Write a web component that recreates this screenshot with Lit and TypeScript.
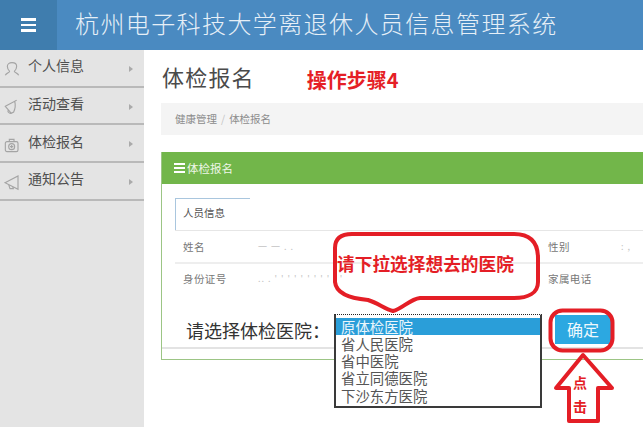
import { LitElement, html, css, svg } from "lit";
import { customElement } from "lit/decorators.js";

const NAV = [
  { t: "个人信息", i: svg`<path d="M8.500 15.500C5.500 13 5 10 5 8c0-3.500 3-5.500 7-5.500s7 2 7 5.500c0 2-.5 5-3.500 7.500 0 2 5 2.500 6.500 6M8.500 15.500c0 2-5 2.500-6.500 6"/>` },
  { t: "活动查看", i: svg`<path d="M2 11L16 3.500c1 4 2.500 7-1.500 16L11 21.500z M6 17c-1 3 3.500 6 6 3.500M16 3.500l3-1.500"/>` },
  { t: "体检报名", i: svg`<rect x="2" y="7" width="19" height="15" rx="2.500"/><path d="M8 7V3.500h7V7"/><circle cx="11.500" cy="14.500" r="4.500"/><path d="M11.500 12v5M9 14.500h5"/>` },
  { t: "通知公告", i: svg`<path d="M1.500 13L21 3v20L1.500 13z M7 16l2 6h5l-1-3"/>` },
];
const HOSPITALS = ["原体检医院", "省人民医院", "省中医院", "省立同德医院", "下沙东方医院"];

@customElement("app-root")
export class AppRoot extends LitElement {
  static styles = css`
    :host { display: block; position: relative; width: 643px; height: 427px; overflow: hidden; background: #fff;
      font-family: "Noto Sans CJK SC", "Liberation Sans", sans-serif; color: #555; }
    .top { display: flex; height: 50px; background: #4a8ac1; }
    .toggle { width: 57px; background: #3f7dae; display: flex; flex-direction: column; justify-content: center; align-items: center; gap: 3px; }
    .toggle i { display: block; width: 15px; height: 2.500px; background: #fff; }
    .brand { margin-left: 18px; font-size: 24px; letter-spacing: 1.400px; line-height: 45px; color: #e6eff7; font-weight: 300; white-space: nowrap; }
    .main { display: flex; height: 377px; }
    .side { width: 144px; flex: none; background: #e4e4e4; }
    .nav { height: 35.700px; border-bottom: 2px solid #b9b9b9; display: flex; align-items: center; padding: 0 11px 0 4px; }
    .nav svg { width: 16px; height: 18px; fill: none; stroke: #a4a4a4; stroke-width: 1.700; flex: none; margin-top: 3px; }
    .nav span { margin-left: 8px; font-size: 14px; color: #4f4f4f; flex: 1; line-height: 1; margin-top: -5px; }
    .nav b { width: 0; height: 0; border-left: 4px solid #aaa; border-top: 3.500px solid transparent; border-bottom: 3.500px solid transparent; margin-top: 2px; }
    .content { flex: 1; min-width: 0; padding: 14px 0 0 17px; }
    .head { display: flex; align-items: flex-start; height: 39px; margin-left: 1px; }
    .head h1 { margin: 0; font-size: 22px; line-height: 24px; font-weight: 400; letter-spacing: 1.200px; color: #4a4a4a; }
    .step { margin-left: 52px; margin-top: 4px; font-size: 20px; line-height: 24px; font-weight: 700; color: #e51f26; }
    .crumb { height: 32px; box-sizing: border-box; padding: 0 0 2px 14px; background: #f4f4f4; display: flex; align-items: center; font-size: 10.500px; color: #8c8c8c; width: 490px; }
    .crumb em { font-style: normal; color: #c4c4c4; margin: 0 4px; }
    .panel { margin-top: 17px; width: 520px; height: 208px; border: 1px solid #9cc585; border-top: 0; box-sizing: border-box; }
    .panel-h { height: 32px; background: #72b64a; color: #eef7e8; display: flex; align-items: center; padding-left: 12px; font-size: 11.500px; gap: 2px; }
    .burger { display: flex; flex-direction: column; gap: 2px; }
    .burger i { display: block; width: 11px; height: 1.700px; background: #fff; }
    .body { padding: 14px 0 0 13px; }
    .tab { width: 75px; height: 32px; box-sizing: border-box; border: 1px solid #a9c6de; border-right: 0; border-bottom: 0; padding-left: 7px; font-size: 10.500px; line-height: 27px; color: #555; }
    .row { display: grid; grid-template-columns: 75px 290px 73px 1fr; height: 30.500px; align-items: center; padding-left: 8px; border-top: 1.500px solid #e6e6e6; font-size: 10.500px; color: #777; letter-spacing: .4px; }
    .row.second { border-top-width: 2px; border-top-color: #eee; height: 29px; }
    .smudge { color: #c4c4c4; font-size: 9px; letter-spacing: 1px; white-space: nowrap; }
    .choose { display: flex; align-items: flex-start; height: 33px; margin: 21px 0 0 -13px; padding-left: 24px; border-bottom: 2px solid #e3e3e3; }
    .choose label { width: 148px; flex: none; font-size: 18px; color: #333; line-height: 32px; white-space: nowrap; }
    .list { position: relative; width: 208px; height: 94px; box-sizing: border-box; flex: none; background: #fff; border: 2px solid #3a3a3a; border-top: 1px dotted #222; padding-top: 3px; font-size: 14.400px; line-height: 17.300px; color: #555; z-index: 1; }
    .list div { padding-left: 5px; height: 17.300px; white-space: nowrap; }
    .list .sel { background: #2a9ed9; color: #eaf6fc; }
    .ok { margin-left: 13px; width: 56px; height: 29px; background: #2ca8e1; color: #eef8fd; border: 0; padding: 0; font: inherit; font-size: 16px; line-height: 29px; text-align: center; margin-top: 1px; }
    .overlay { position: absolute; inset: 0; width: 643px; height: 427px; pointer-events: none; z-index: 2; }
    .overlay path, .overlay rect { fill: none; stroke: #e41e26; stroke-width: 4; stroke-linejoin: round; }
    .overlay text { fill: #e41e26; font-weight: 700; font-family: "Noto Sans CJK SC", sans-serif; }
    .call-t { font-size: 17.700px; }
    .arr-t { font-size: 14px; }
  `;

  render() {
    return html`
      <div class="top">
        <div class="toggle"><i></i><i></i><i></i></div>
        <div class="brand">杭州电子科技大学离退休人员信息管理系统</div>
      </div>
      <div class="main">
        <div class="side">
          ${NAV.map(n => html`<div class="nav"><svg viewBox="0 0 24 24">${n.i}</svg><span>${n.t}</span><b></b></div>`)}
        </div>
        <div class="content">
          <div class="head"><h1>体检报名</h1><div class="step">操作步骤4</div></div>
          <div class="crumb">健康管理<em>/</em>体检报名</div>
          <div class="panel">
            <div class="panel-h"><div class="burger"><i></i><i></i><i></i></div>体检报名</div>
            <div class="body">
              <div class="tab">人员信息</div>
              <div class="row"><span>姓名</span><span class="smudge">一 一 . .</span><span>性别</span><span class="smudge">: ,</span></div>
              <div class="row second"><span>身份证号</span><span class="smudge">.. .  ' ' ' ' ' ' ' ' ' ' '</span><span>家属电话</span><span></span></div>
              <div class="choose">
                <label>请选择体检医院：</label>
                <div class="list">
                  ${HOSPITALS.map((h, i) => html`<div class=${i === 0 ? "sel" : ""}>${h}</div>`)}
                </div>
                <button class="ok">确定</button>
              </div>
            </div>
          </div>
        </div>
      </div>
      <svg class="overlay" viewBox="0 0 643 427">
        <path d="M352 234 H514 C532 234 538 244 538 258 V282 C538 293 528 298 514 298 H420 C410 299 402 309 393 311 C385 309 378 303 368 300 C346 298 336 292 335 282 V248 C335 238 342 234 352 234 Z"/>
        <text class="call-t" x="337" y="271">请下拉选择想去的医院</text>
        <rect x="550.500" y="310.500" width="62" height="40" rx="12"/>
        <path d="M583 355 L556 388 H569 V421 H598 V388 L612 388 Z"/>
        <text class="arr-t" x="573" y="388">点</text>
        <text class="arr-t" x="573" y="412">击</text>
      </svg>
    `;
  }
}
